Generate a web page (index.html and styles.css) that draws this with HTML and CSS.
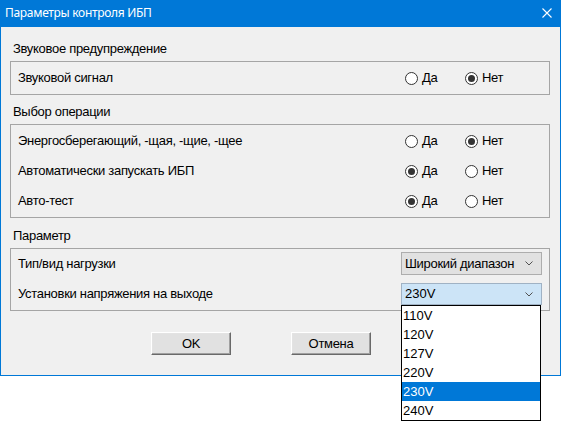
FILE: index.html
```html
<!DOCTYPE html>
<html lang="ru">
<head>
<meta charset="utf-8">
<title>Параметры контроля ИБП</title>
<link rel="stylesheet" href="styles.css">
</head>
<body>
<div class="window">
  <div class="titlebar">
    <span class="title">Параметры контроля ИБП</span>
    <svg class="close" width="10" height="10" viewBox="0 0 10 10"><path d="M0.5 0.5 L9.5 9.5 M9.5 0.5 L0.5 9.5" stroke="#fff" stroke-width="1.1" fill="none"/></svg>
  </div>
  <div class="content">
    <section class="group">
      <div class="group-title">Звуковое предупреждение</div>
      <div class="group-box">
        <div class="row">
          <span class="label">Звуковой сигнал</span>
          <div class="radios">
            <span class="radio"><span class="circle"></span>Да</span>
            <span class="radio"><span class="circle checked"></span>Нет</span>
          </div>
        </div>
      </div>
    </section>
    <section class="group second">
      <div class="group-title">Выбор операции</div>
      <div class="group-box">
        <div class="row">
          <span class="label">Энергосберегающий, -щая, -щие, -щее</span>
          <div class="radios">
            <span class="radio"><span class="circle"></span>Да</span>
            <span class="radio"><span class="circle checked"></span>Нет</span>
          </div>
        </div>
        <div class="row">
          <span class="label">Автоматически запускать ИБП</span>
          <div class="radios">
            <span class="radio"><span class="circle checked"></span>Да</span>
            <span class="radio"><span class="circle"></span>Нет</span>
          </div>
        </div>
        <div class="row">
          <span class="label">Авто-тест</span>
          <div class="radios">
            <span class="radio"><span class="circle checked"></span>Да</span>
            <span class="radio"><span class="circle"></span>Нет</span>
          </div>
        </div>
      </div>
    </section>
    <section class="group third">
      <div class="group-title">Параметр</div>
      <div class="group-box params">
        <div class="param-row">
          <span class="label">Тип/вид нагрузки</span>
          <div class="select">
            <span class="select-text">Широкий диапазон</span>
            <svg class="chev" width="8" height="5" viewBox="0 0 8 5"><path d="M0.5 0.5 L4 4 L7.5 0.5" stroke="#505050" stroke-width="1" fill="none"/></svg>
          </div>
        </div>
        <div class="param-row">
          <span class="label">Установки напряжения на выходе</span>
          <div class="select open">
            <span class="select-text num">230V</span>
            <svg class="chev" width="8" height="5" viewBox="0 0 8 5"><path d="M0.5 0.5 L4 4 L7.5 0.5" stroke="#505050" stroke-width="1" fill="none"/></svg>
          </div>
        </div>
      </div>
    </section>
    <div class="buttons">
      <button class="btn">OK</button>
      <button class="btn">Отмена</button>
    </div>
  </div>
</div>
<ul class="dropdown-list">
  <li>110V</li>
  <li>120V</li>
  <li>127V</li>
  <li>220V</li>
  <li class="selected">230V</li>
  <li>240V</li>
</ul>
</body>
</html>
```
FILE: styles.css
```css
* { box-sizing: border-box; }
html, body {
  margin: 0;
  padding: 0;
  background: #ffffff;
}
body {
  position: relative;
  width: 562px;
  height: 421px;
  overflow: hidden;
  font-family: "Liberation Sans", Arial, sans-serif;
  font-size: 13px;
  letter-spacing: -0.3px;
  color: #000;
}
.window {
  width: 561px;
  height: 376px;
  border: 1px solid #0078d7;
  border-top: none;
  background: #f0f0f0;
  display: flex;
  flex-direction: column;
}
.titlebar {
  height: 27px;
  background: #0078d7;
  display: flex;
  align-items: center;
  justify-content: space-between;
  padding: 0 9px 2px 5px;
  margin: 0 -1px;
}
.title {
  color: #fff;
  font-family: "Noto Sans", "Open Sans", sans-serif;
  font-size: 12px;
  letter-spacing: -0.3px;
  line-height: 16px;
}
.close { display: block; margin-top: 1px; }
.content {
  padding: 14px 10px 0 9px;
  flex: 1;
}
.group-title {
  height: 16px;
  line-height: 16px;
  padding-left: 3px;
  margin-bottom: 4px;
}
.group.second { margin-top: 9px; }
.group.third { margin-top: 10px; }
.group-box {
  border: 1px solid #a5a5a5;
  padding: 1px 0;
}
.row {
  height: 30px;
  display: flex;
  align-items: center;
  padding-left: 7px;
}
.label {
  flex: 1;
  line-height: 16px;
}
.radios {
  display: flex;
  margin-right: 24px;
}
.radio {
  width: 60px;
  display: flex;
  align-items: center;
  line-height: 16px;
}
.circle {
  width: 13px;
  height: 13px;
  border: 1px solid #333;
  border-radius: 50%;
  background: #fff;
  margin-right: 4px;
  position: relative;
  flex: none;
}
.circle.checked::after {
  content: "";
  position: absolute;
  left: 2px;
  top: 2px;
  width: 7px;
  height: 7px;
  border-radius: 50%;
  background: #333;
}
.params {
  padding: 3px 7px 5px 7px;
  display: flex;
  flex-direction: column;
  gap: 7px;
}
.param-row {
  height: 23px;
  display: flex;
  align-items: center;
}
.select {
  width: 141px;
  height: 23px;
  border: 1px solid #adadad;
  background: #e1e1e1;
  display: flex;
  align-items: center;
  justify-content: space-between;
  padding: 0 8px 0 3px;
}
.select.open {
  height: 22px;
  margin-top: 1px;
  background: #cce4f7;
  border-color: #a0b2c4;
}
.select-text { line-height: 16px; }
.select-text.num { letter-spacing: 0; }
.chev { display: block; }
.buttons {
  display: flex;
  gap: 60px;
  margin-top: 21px;
  padding-left: 141px;
}
.btn {
  width: 80px;
  height: 23px;
  font-family: "Liberation Sans", Arial, sans-serif;
  font-size: 13px;
  letter-spacing: -0.3px;
  color: #000;
  background: #e1e1e1;
  border: 1px solid;
  border-color: #ffffff #696969 #696969 #ffffff;
  box-shadow: inset -1px -1px 0 #a0a0a0, inset 1px 1px 0 #e3e3e3;
  padding: 0;
  margin: 0;
}
.dropdown-list {
  position: absolute;
  left: 401px;
  top: 305px;
  width: 140px;
  margin: 0;
  padding: 0;
  list-style: none;
  border: 1px solid #000;
  background: #fff;
  letter-spacing: 0;
}
.dropdown-list li {
  height: 19px;
  line-height: 19px;
  padding-left: 1px;
}
.dropdown-list li.selected {
  background: #0078d7;
  color: #fff;
}
```
